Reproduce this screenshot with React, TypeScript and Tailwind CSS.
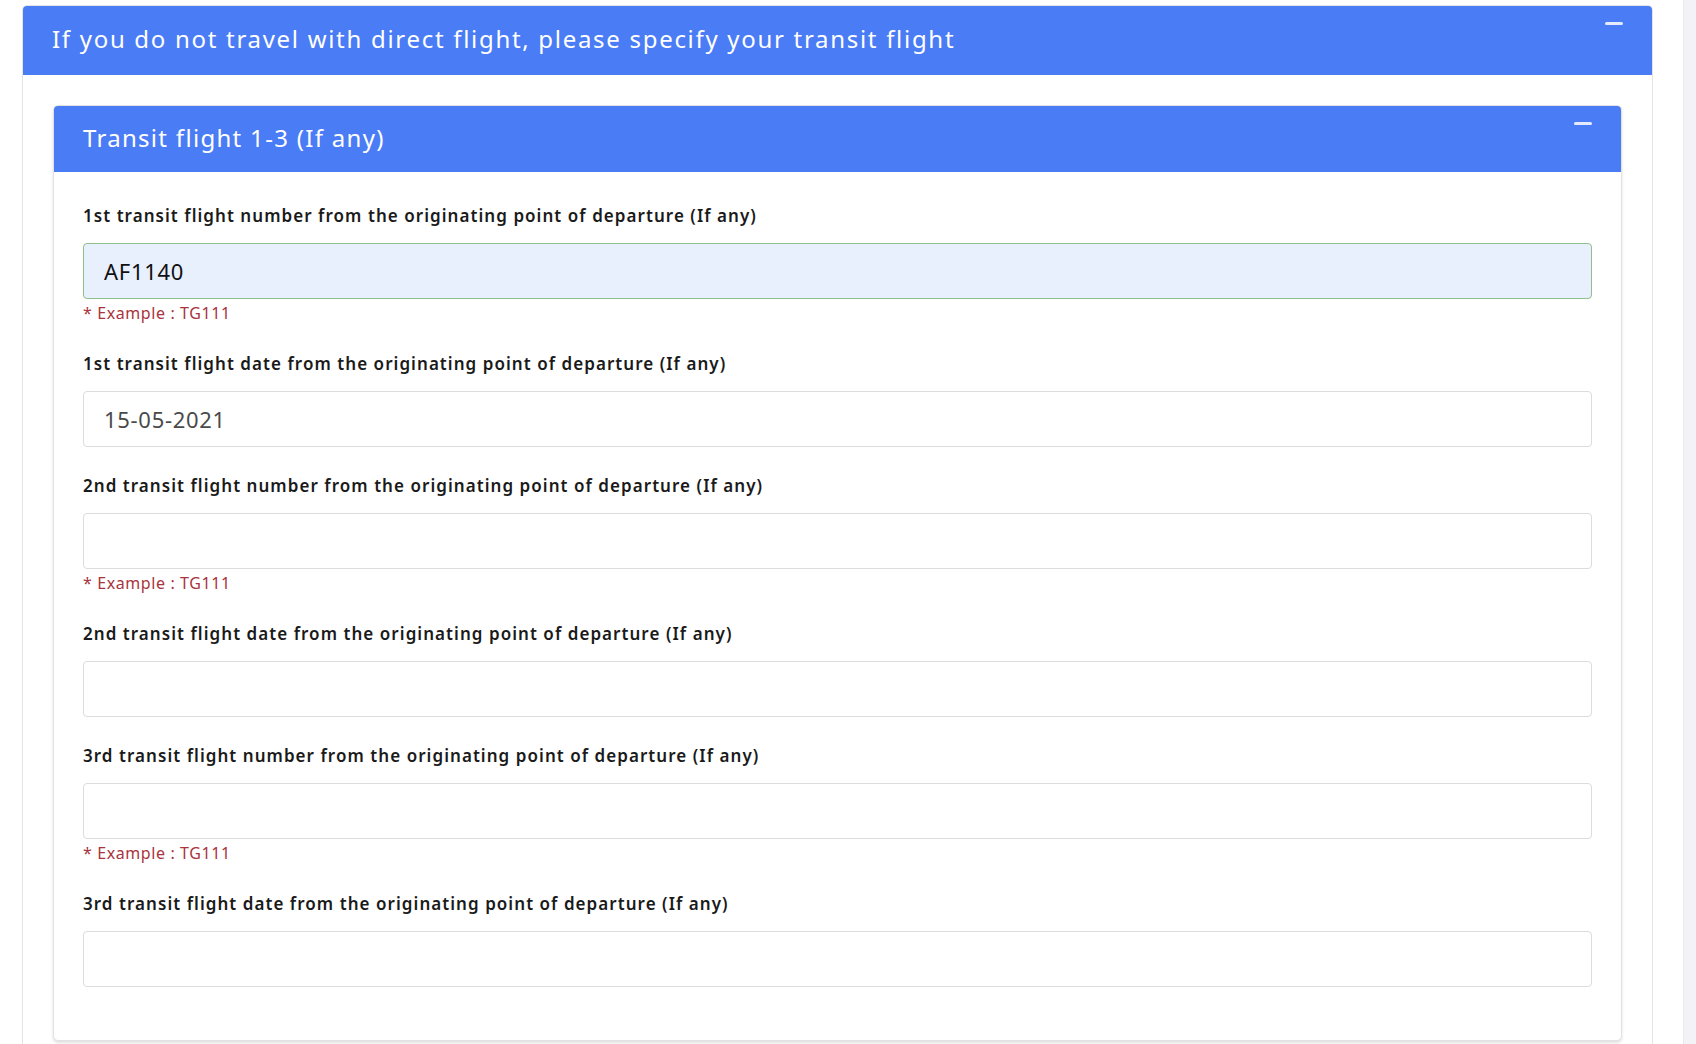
import React from "react";

interface TransitField {
  id: string;
  label: string;
  value?: string;
  example?: boolean;
  autofilled?: boolean;
}

const fields: TransitField[] = [
  {
    id: "transit1_no",
    label: "1st transit flight number from the originating point of departure (If any)",
    value: "AF1140",
    example: true,
    autofilled: true,
  },
  {
    id: "transit1_date",
    label: "1st transit flight date from the originating point of departure (If any)",
    value: "15-05-2021",
  },
  {
    id: "transit2_no",
    label: "2nd transit flight number from the originating point of departure (If any)",
    example: true,
  },
  {
    id: "transit2_date",
    label: "2nd transit flight date from the originating point of departure (If any)",
  },
  {
    id: "transit3_no",
    label: "3rd transit flight number from the originating point of departure (If any)",
    example: true,
  },
  {
    id: "transit3_date",
    label: "3rd transit flight date from the originating point of departure (If any)",
  },
];

function CollapseDash() {
  return <span className="mt-[16px] block h-[3px] w-[18px] shrink-0 rounded-full bg-white/85" />;
}

function Field({ field }: { field: TransitField }) {
  return (
    <div className="mb-[27px]">
      <label
        htmlFor={field.id}
        className="mb-[15px] block text-[17px] font-semibold leading-6 tracking-[1.05px] text-[#1a1a1a]"
      >
        {field.label}
      </label>
      <input
        id={field.id}
        type="text"
        defaultValue={field.value}
        className={`block h-[56px] w-full rounded-[4px] border px-[20px] text-[22px] tracking-[0.7px] outline-none ${
          field.autofilled
            ? "border-[#8fbf8a] bg-[#e8f0fe] text-[#111]"
            : "border-[#dcdcdc] bg-white text-[#4a4a4a]"
        }`}
      />
      {field.example && (
        <p className="mt-[2px] text-[16px] leading-6 tracking-[0.6px] text-[#a8343d]">* Example : TG111</p>
      )}
    </div>
  );
}

export default function App() {
  return (
    <div className="flex h-[1044px] w-full overflow-hidden bg-white font-['Noto_Sans',sans-serif]">
      <div className="flex-1 pl-[22px] pr-[30px] pt-[5px]">
        {/* Transit section */}
        <div className="rounded-[5px] border border-[#e4e4e4] bg-white">
          <div className="flex h-[69px] items-start justify-between rounded-t-[4px] bg-[#4a7cf6] px-[29px]">
            <h2 className="self-center pb-[3px] text-[24px] tracking-[1.7px] text-white">
              If you do not travel with direct flight, please specify your transit flight
            </h2>
            <CollapseDash />
          </div>

          <div className="p-[30px]">
            <div className="overflow-hidden rounded-[5px] border border-[#e2e2e2] bg-white shadow-[0_2px_3px_rgba(0,0,0,0.12)]">
              <div className="flex h-[66px] items-start justify-between bg-[#4a7cf6] px-[29px]">
                <h3 className="self-center pb-[2px] text-[24px] tracking-[1.3px] text-white">
                  Transit flight 1-3 (If any)
                </h3>
                <CollapseDash />
              </div>
              <div className="px-[29px] pb-[26px] pt-[32px]">
                {fields.map((f) => (
                  <Field key={f.id} field={f} />
                ))}
              </div>
            </div>
          </div>
        </div>
      </div>
      <div className="w-[13px] border-l border-[#e9e9ef] bg-[#f3f3f7]" />
    </div>
  );
}
